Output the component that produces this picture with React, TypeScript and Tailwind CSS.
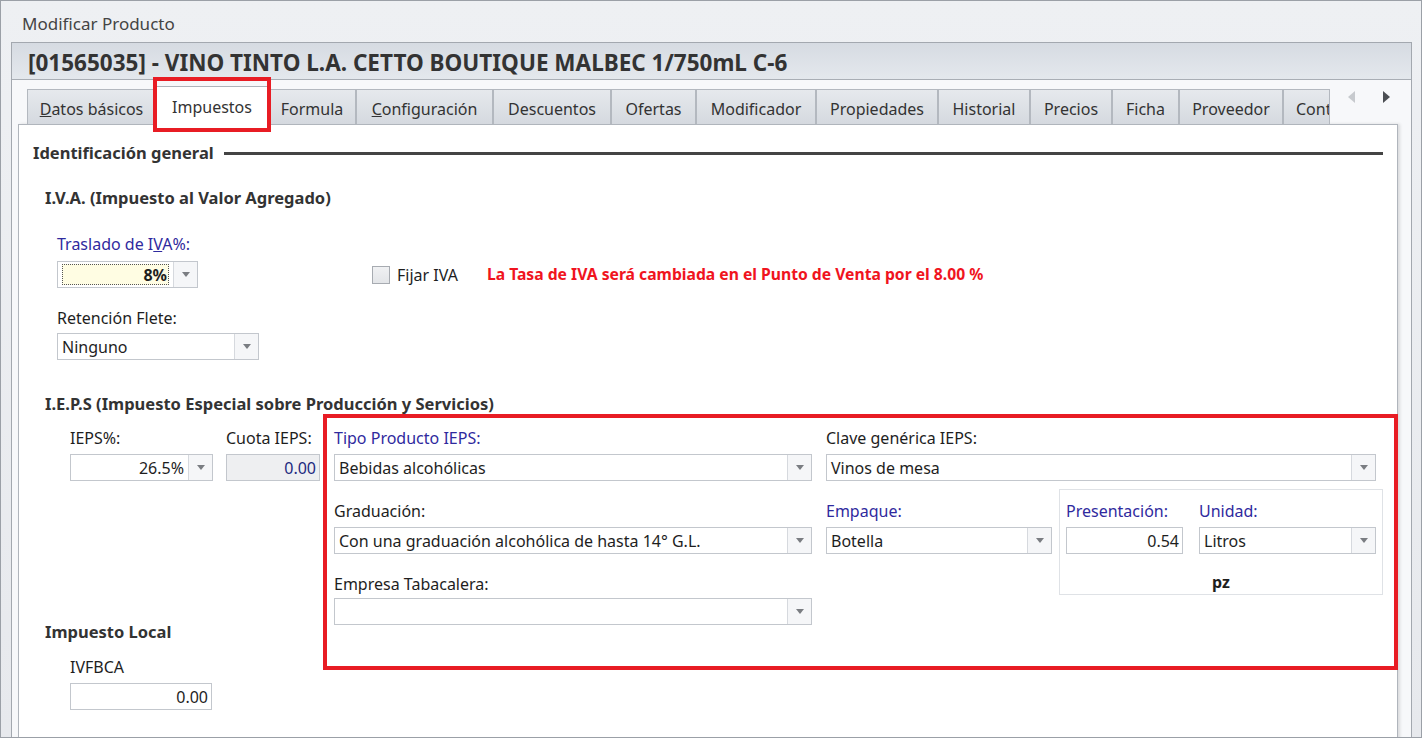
import React from 'react';

const tabs: { label: string; w: number; u?: boolean; active?: boolean }[] = [
  { label: 'Datos básicos', w: 129, u: true },
  { label: 'Impuestos', w: 112, active: true },
  { label: 'Formula', w: 88 },
  { label: 'Configuración', w: 137, u: true },
  { label: 'Descuentos', w: 118 },
  { label: 'Ofertas', w: 85 },
  { label: 'Modificador', w: 120 },
  { label: 'Propiedades', w: 122 },
  { label: 'Historial', w: 92 },
  { label: 'Precios', w: 82 },
  { label: 'Ficha', w: 67 },
  { label: 'Proveedor', w: 104 },
  { label: 'Contabilidad', w: 47 },
];

function Arrow() {
  return (
    <svg width="8" height="5" viewBox="0 0 8 5">
      <path d="M0 0 L8 0 L4 5 Z" fill="#7a7d82" />
    </svg>
  );
}

function Combo({ w, value, right, focus }: { w: number; value?: string; right?: boolean; focus?: boolean }) {
  return (
    <div className="flex h-[27px] border border-[#c3c7cd] bg-white" style={{ width: w }}>
      <div className={`flex flex-1 items-center px-[4px] ${right ? 'justify-end' : ''}`}>
        {focus ? (
          <div className="flex h-[21px] w-full items-center justify-end border border-dotted border-[#555] bg-[#fffde3] pr-[1px] font-bold">
            {value}
          </div>
        ) : (
          <span className="whitespace-nowrap">{value}</span>
        )}
      </div>
      <div className="flex w-[24px] items-center justify-center border-l border-[#d6d9de] bg-[#f5f6f8]">
        <Arrow />
      </div>
    </div>
  );
}

function Input({ w, value, disabled }: { w: number; value: string; disabled?: boolean }) {
  return (
    <div
      className={`flex h-[27px] items-center justify-end border border-[#c3c7cd] px-[3px] ${disabled ? 'bg-[#eeeff1] text-[#1d2a80]' : 'bg-white'}`}
      style={{ width: w }}
    >
      {value}
    </div>
  );
}

function Label({ children, blue }: { children: React.ReactNode; blue?: boolean }) {
  return (
    <div className={`h-[20px] whitespace-nowrap leading-[20px] ${blue ? 'text-[#2f2a9e]' : 'text-[#1e1e1e]'}`}>{children}</div>
  );
}

export default function App() {
  return (
    <div className="h-[738px] w-[1422px] overflow-hidden border border-[#9ba0a7] bg-gradient-to-b from-[#eef0f3] to-[#e7e9ed] font-['Noto_Sans',sans-serif] text-[16px] text-[#1e1e1e]">
      {/* window title */}
      <div className="flex h-[41px] items-center pl-[21px] pt-[4px] text-[17px] text-[#444]">Modificar Producto</div>

      <div className="ml-[10px] mr-[9px] h-[700px] border border-[#a3a8af] bg-[#f7f8fa]">
        {/* product header */}
        <div className="flex h-[37px] items-center border-b border-[#a9aeb5] bg-gradient-to-b from-[#d6dbe2] to-[#e4e8ed] pl-[16px] pt-[3px] text-[22.5px] font-bold text-[#333]">
          [01565035] - VINO TINTO L.A. CETTO BOUTIQUE MALBEC 1/750mL C-6
        </div>

        {/* tabs */}
        <div className="relative flex h-[44px] items-end pl-[15px]">
          {tabs.map((t) =>
            t.active ? (
              <div key={t.label} className="relative z-10 -mb-px flex h-[39px] shrink-0 items-center justify-center border border-b-0 border-[#aeb3ba] bg-white pt-[2px] text-[#333]" style={{ width: t.w }}>
                {t.label}
                <div className="pointer-events-none absolute left-[-4px] top-[-10px] h-[55px] w-[118px] border-4 border-[#e81c24]" />
              </div>
            ) : (
              <div
                key={t.label}
                className="flex h-[35px] shrink-0 items-center justify-center overflow-hidden whitespace-nowrap border-x border-t border-[#b3b8bf] bg-gradient-to-b from-[#e6e9ed] to-[#d5d9df] pt-[3px] text-[#333]"
                style={{ width: t.w }}
              >
                {t.u ? (
                  <span>
                    <span className="underline">{t.label[0]}</span>
                    {t.label.slice(1)}
                  </span>
                ) : t.w < 60 ? (
                  <span className="w-full self-center pl-[12px] text-left">{t.label}</span>
                ) : (
                  t.label
                )}
              </div>
            )
          )}
          <div className="ml-[18px] flex h-full items-start gap-[28px] pt-[11px]">
            <svg width="7" height="12" viewBox="0 0 7 12">
              <path d="M7 0 L0 6 L7 12 Z" fill="#c7cace" />
            </svg>
            <svg width="7" height="12" viewBox="0 0 7 12">
              <path d="M0 0 L7 6 L0 12 Z" fill="#4b4e53" />
            </svg>
          </div>
        </div>

        {/* content panel */}
        <div className="ml-[6px] mr-[13px] h-[620px] border border-[#b0b5bc] bg-white pl-[14px] pr-[14px] pt-[17px] shadow-[2px_0_3px_rgba(0,0,0,0.12)]">
          <div className="flex h-[22px] items-center gap-[10px]">
            <span className="whitespace-nowrap text-[16.5px] font-bold text-[#333]">Identificación general</span>
            <div className="h-[3px] flex-1 bg-[#444]" />
          </div>

          <div className="pl-[12px]">
            <div className="mt-[23px] h-[22px] text-[16.5px] font-bold leading-[22px] text-[#333]">I.V.A. (Impuesto al Valor Agregado)</div>

            <div className="mt-[25px] pl-[12px]">
              <Label blue>
                Traslado de I<span className="underline">V</span>A%:
              </Label>
              <div className="mt-[7px] flex items-center">
                <Combo w={141} value="8%" focus />
                <div className="ml-[174px] h-[18px] w-[18px] border border-[#a7abb1] bg-gradient-to-b from-[#f0f1f3] to-[#e3e5e8]" />
                <span className="ml-[7px]">Fijar IVA</span>
                <span className="ml-[29px] text-[15.7px] font-bold text-[#f0141e]">La Tasa de IVA será cambiada en el Punto de Venta por el 8.00 %</span>
              </div>

              <div className="mt-[20px]">
                <Label>Retención Flete:</Label>
              </div>
              <div className="mt-[5px]">
                <Combo w={202} value="Ninguno" />
              </div>
            </div>

            <div className="mt-[33px] h-[22px] text-[16.5px] font-bold leading-[22px] text-[#333]">
              I.E.P.S (Impuesto Especial sobre Producción y Servicios)
            </div>

            <div className="mt-[13px] flex">
              {/* left column */}
              <div className="w-[289px] shrink-0">
                <div className="flex pl-[25px]">
                  <div>
                    <Label>IEPS%:</Label>
                    <div className="mt-[6px]">
                      <Combo w={143} value="26.5%" right />
                    </div>
                  </div>
                  <div className="ml-[13px]">
                    <Label>Cuota IEPS:</Label>
                    <div className="mt-[6px]">
                      <Input w={94} value="0.00" disabled />
                    </div>
                  </div>
                </div>

                <div className="mt-[140px] h-[22px] text-[16.5px] font-bold leading-[22px] text-[#333]">Impuesto Local</div>
                <div className="mt-[14px] pl-[25px]">
                  <Label>IVFBCA</Label>
                  <div className="mt-[6px]">
                    <Input w={142} value="0.00" />
                  </div>
                </div>
              </div>

              {/* right grid */}
              <div className="relative flex">
                <div className="pointer-events-none absolute left-[-11px] top-[-14px] h-[256px] w-[1075px] border-4 border-[#e81c24]" />
                <div className="w-[478px]">
                  <Label blue>Tipo Producto IEPS:</Label>
                  <div className="mt-[6px]">
                    <Combo w={478} value="Bebidas alcohólicas" />
                  </div>
                  <div className="mt-[20px]">
                    <Label>Graduación:</Label>
                  </div>
                  <div className="mt-[6px]">
                    <Combo w={478} value="Con una graduación alcohólica de hasta 14° G.L." />
                  </div>
                  <div className="mt-[20px]">
                    <Label>Empresa Tabacalera:</Label>
                  </div>
                  <div className="mt-[4px]">
                    <Combo w={478} value="" />
                  </div>
                </div>

                <div className="ml-[14px]">
                  <Label>Clave genérica IEPS:</Label>
                  <div className="mt-[6px]">
                    <Combo w={550} value="Vinos de mesa" />
                  </div>
                  <div className="mt-[8px] flex">
                    <div className="pt-[12px]">
                      <Label blue>Empaque:</Label>
                      <div className="mt-[6px]">
                        <Combo w={226} value="Botella" />
                      </div>
                    </div>
                    <div className="ml-[7px] h-[106px] w-[324px] border border-[#dfe2e6] pl-[6px] pt-[11px]">
                      <div className="flex">
                        <div>
                          <Label blue>Presentación:</Label>
                          <div className="mt-[6px]">
                            <Input w={117} value="0.54" />
                          </div>
                        </div>
                        <div className="ml-[16px]">
                          <Label blue>Unidad:</Label>
                          <div className="mt-[6px]">
                            <Combo w={177} value="Litros" />
                          </div>
                        </div>
                      </div>
                      <div className="mt-[18px] pr-[6px] text-center font-bold leading-[20px]">pz</div>
                    </div>
                  </div>
                </div>
              </div>
            </div>
          </div>
        </div>
      </div>
    </div>
  );
}
